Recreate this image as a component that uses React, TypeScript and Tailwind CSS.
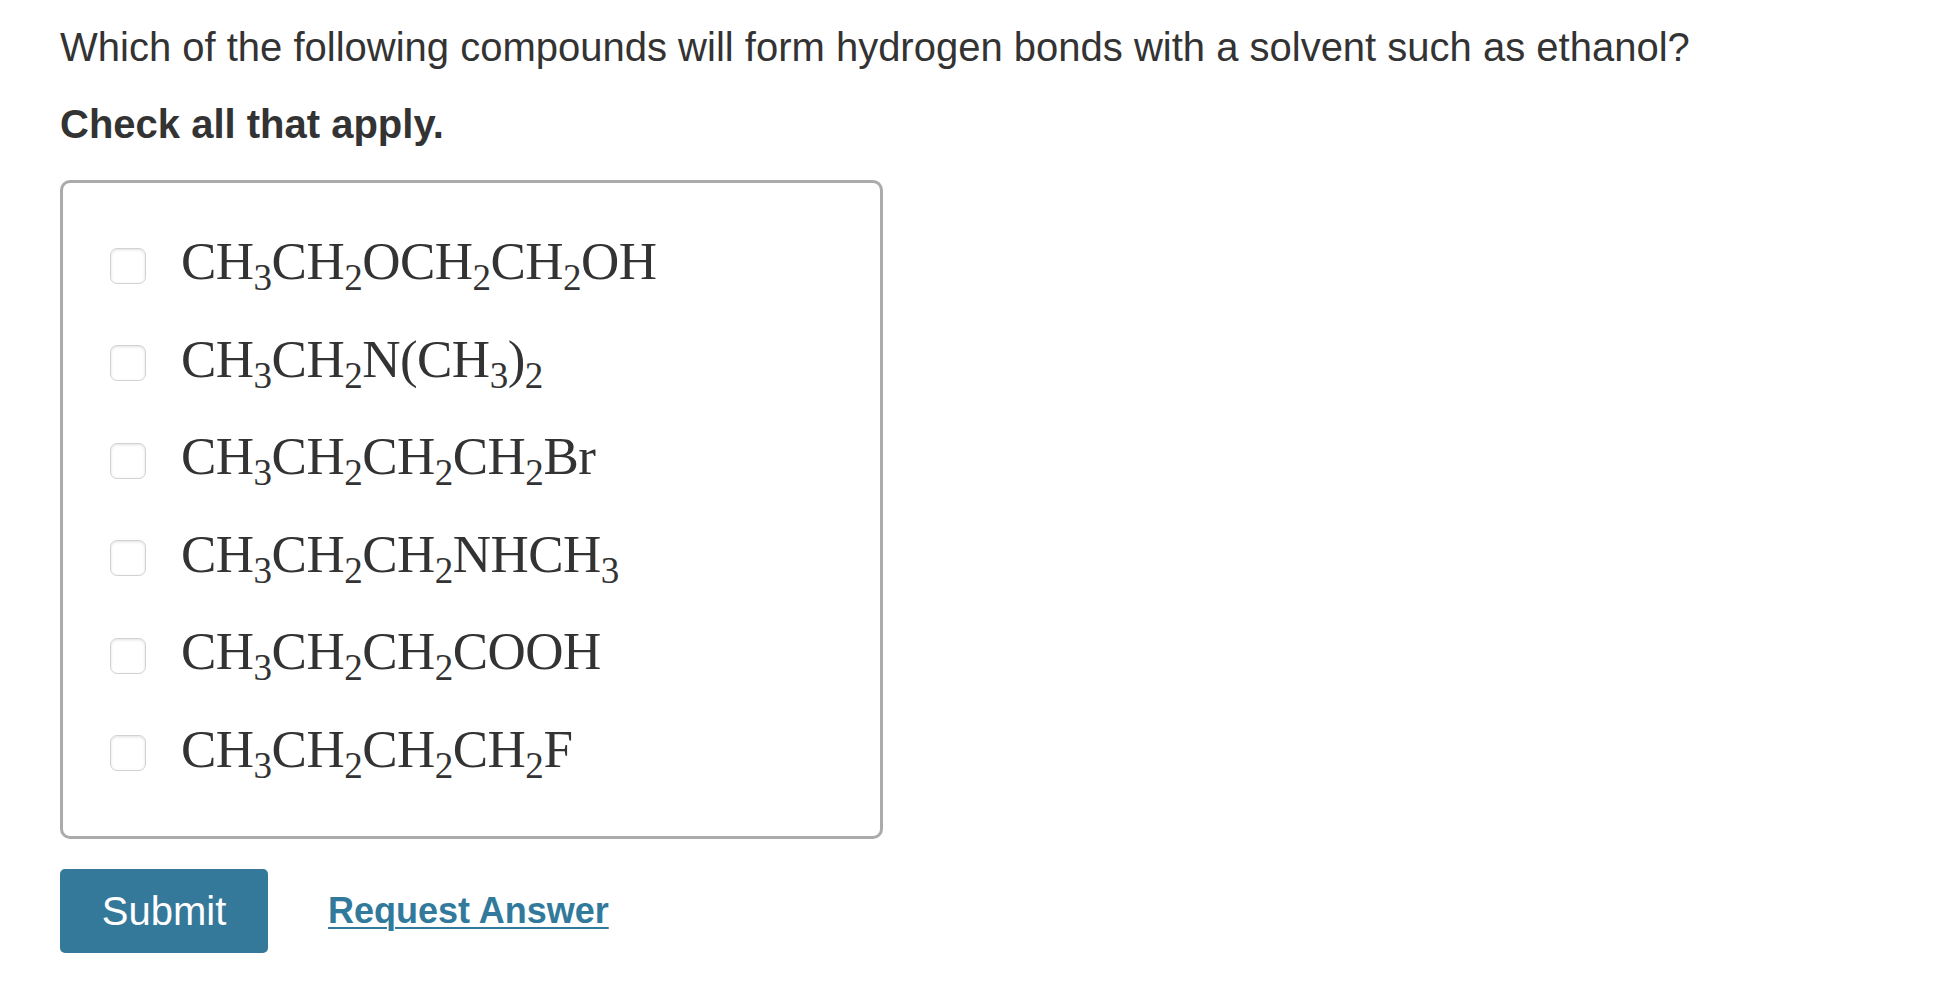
import React from "react";

type Part = { t: string; sub?: boolean };

// Parse a condensed formula like "CH3CH2OH" into atom text and subscript digits.
function parseFormula(f: string): Part[] {
  const parts: Part[] = [];
  for (const ch of f) {
    if (/[0-9]/.test(ch)) {
      parts.push({ t: ch, sub: true });
    } else {
      const last = parts[parts.length - 1];
      if (last && !last.sub) last.t += ch;
      else parts.push({ t: ch });
    }
  }
  return parts;
}

function Formula({ f }: { f: string }) {
  return (
    <span className="font-['Liberation_Serif','DejaVu_Serif',serif] text-[53px] leading-none text-[#333333] whitespace-nowrap tracking-[-0.01em]">
      {parseFormula(f).map((p, i) =>
        p.sub ? (
          <span key={i} className="text-[0.7em] align-[-0.3em]">
            {p.t}
          </span>
        ) : (
          <span key={i}>{p.t}</span>
        )
      )}
    </span>
  );
}

const options = [
  "CH3CH2OCH2CH2OH",
  "CH3CH2N(CH3)2",
  "CH3CH2CH2CH2Br",
  "CH3CH2CH2NHCH3",
  "CH3CH2CH2COOH",
  "CH3CH2CH2CH2F",
];

export default function App() {
  return (
    <div className="min-h-screen bg-white font-['Liberation_Sans',Arial,sans-serif] text-[#333333] pl-[60px] pt-[23px]">
      <p className="text-[40px] leading-[48px]">
        Which of the following compounds will form hydrogen bonds with a solvent such as ethanol?
      </p>
      <p className="mt-[29px] text-[40px] leading-[48px] font-bold">Check all that apply.</p>

      <div className="mt-[32px] w-[823px] h-[659px] rounded-[10px] border-[3px] border-[#ababab] pl-[47px] pt-[34px]">
        {options.map((o) => (
          <label key={o} className="flex h-[97.5px] items-center gap-[35px]">
            <input
              type="checkbox"
              className="appearance-none w-[36px] h-[36px] shrink-0 rounded-[7px] border border-[#d2d2d2] bg-white shadow-[inset_0_1px_3px_rgba(0,0,0,0.12)]"
            />
            <Formula f={o} />
          </label>
        ))}
      </div>

      <div className="mt-[30px] flex items-center gap-[60px]">
        <button className="w-[208px] h-[84px] rounded-[5px] bg-[#35799a] text-white text-[40px]">
          Submit
        </button>
        <a href="#" className="text-[36px] font-bold text-[#327a9c] underline decoration-2 underline-offset-[4px]">
          Request Answer
        </a>
      </div>
    </div>
  );
}
